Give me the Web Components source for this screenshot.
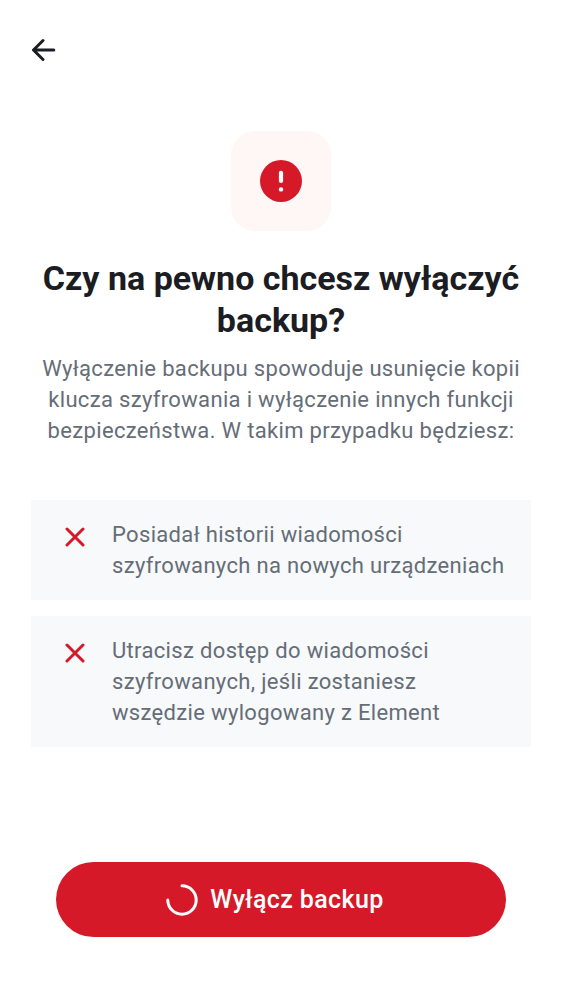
<!DOCTYPE html>
<html lang="pl">
<head>
<meta charset="utf-8">
<meta name="viewport" content="width=device-width, initial-scale=1">
<title>Wyłącz backup</title>
<style>
html, body { margin: 0; background: #fff; }
body { font-family: Roboto, sans-serif; color: #1b1d22; --tracking: 0.015em; }
</style>
</head>
<body>
<disable-backup-page></disable-backup-page>
<script>
class TopBar extends HTMLElement {
  constructor() {
    super();
    this.attachShadow({ mode: 'open' }).innerHTML = `
      <style>
        :host { display: flex; align-items: center; height: 100px; padding: 0 20px; }
        button { display: grid; place-items: center; width: 48px; height: 48px; padding: 0; border: 0; border-radius: 50%; background: none; color: #1b1d22; }
        svg { display: block; }
      </style>
      <button type="button" aria-label="Wstecz">
        <svg width="24" height="24" viewBox="0 0 24 24" fill="none" stroke="currentColor" stroke-width="3" stroke-linecap="round" stroke-linejoin="round"><path d="M21.8 12H2M11 2.5L1.5 12L11 21.5"/></svg>
      </button>`;
  }
}
class AlertBadge extends HTMLElement {
  constructor() {
    super();
    this.attachShadow({ mode: 'open' }).innerHTML = `
      <style>
        :host { display: grid; place-items: center; width: 100px; height: 100px; border-radius: 24px; background: #fff7f6; }
        svg { display: block; }
      </style>
      <svg width="42" height="42" viewBox="0 0 42 42"><circle cx="21" cy="21" r="21" fill="#d51928"/><path d="M21 12.8V21" stroke="#fff" stroke-width="4.2" stroke-linecap="round"/><circle cx="21" cy="29.4" r="2.2" fill="#fff"/></svg>`;
  }
}
class PageIntro extends HTMLElement {
  constructor() {
    super();
    this.attachShadow({ mode: 'open' }).innerHTML = `
      <style>
        :host { display: flex; flex-direction: column; align-items: center; text-align: center; }
        h1 { margin: 26px 0 0; font-size: 34px; line-height: 42px; font-weight: 700; }
        p { margin: 12px 0 0; font-size: 22px; line-height: 31px; letter-spacing: var(--tracking); color: #656d77; }
      </style>
      <alert-badge></alert-badge>
      <h1><slot name="title"></slot></h1>
      <p><slot></slot></p>`;
  }
}
class ConsequenceItem extends HTMLElement {
  constructor() {
    super();
    this.attachShadow({ mode: 'open' }).innerHTML = `
      <style>
        :host { display: flex; align-items: flex-start; gap: 27px; padding: 19px 24px 19px 34px; background: #f7f9fb; color: #656d77; font-size: 22px; line-height: 31px; letter-spacing: var(--tracking); }
        svg { flex: none; margin-top: 8px; }
      </style>
      <svg width="20" height="20" viewBox="0 0 20 20" fill="none" stroke="#d51928" stroke-width="3" stroke-linecap="round"><path d="M2 2L18 18M18 2L2 18"/></svg>
      <span><slot></slot></span>`;
  }
}
class LoadingButton extends HTMLElement {
  constructor() {
    super();
    this.attachShadow({ mode: 'open' }).innerHTML = `
      <style>
        :host { display: block; }
        button { display: flex; align-items: center; justify-content: center; gap: 12px; width: 100%; height: 75px; padding: 0 32px 0 20px; border: 0; border-radius: 38px; background: #d51928; color: #fff; font: 500 25px/32px Roboto, sans-serif; letter-spacing: var(--tracking); }
      </style>
      <button type="button" aria-busy="true">
        <svg width="32" height="32" viewBox="0 0 32 32" fill="none" stroke="#fff" stroke-width="3" stroke-linecap="round"><path d="M16 1.8A14.2 14.2 0 1 1 1.8 16"/></svg>
        <span><slot></slot></span>
      </button>`;
  }
}
class DisableBackupPage extends HTMLElement {
  constructor() {
    super();
    this.attachShadow({ mode: 'open' }).innerHTML = `
      <style>
        :host { display: flex; flex-direction: column; min-height: 100vh; box-sizing: border-box; padding-bottom: 63px; }
        main { flex: 1; padding: 31px 31px 40px; }
        ul { display: flex; flex-direction: column; gap: 16px; margin: 54px 0 0; padding: 0; list-style: none; }
        footer { padding: 0 56px; }
      </style>
      <top-bar></top-bar>
      <main>
        <page-intro>
          <span slot="title">Czy na pewno chcesz wyłączyć backup?</span>
          Wyłączenie backupu spowoduje usunięcie kopii klucza szyfrowania i wyłączenie innych funkcji bezpieczeństwa. W takim przypadku będziesz:
        </page-intro>
        <ul>
          <li><consequence-item>Posiadał historii wiadomości szyfrowanych na nowych urządzeniach</consequence-item></li>
          <li><consequence-item>Utracisz dostęp do wiadomości szyfrowanych, jeśli zostaniesz wszędzie wylogowany z Element</consequence-item></li>
        </ul>
      </main>
      <footer><loading-button>Wyłącz backup</loading-button></footer>`;
  }
}
customElements.define('top-bar', TopBar);
customElements.define('alert-badge', AlertBadge);
customElements.define('page-intro', PageIntro);
customElements.define('consequence-item', ConsequenceItem);
customElements.define('loading-button', LoadingButton);
customElements.define('disable-backup-page', DisableBackupPage);
</script>
</body>
</html>
